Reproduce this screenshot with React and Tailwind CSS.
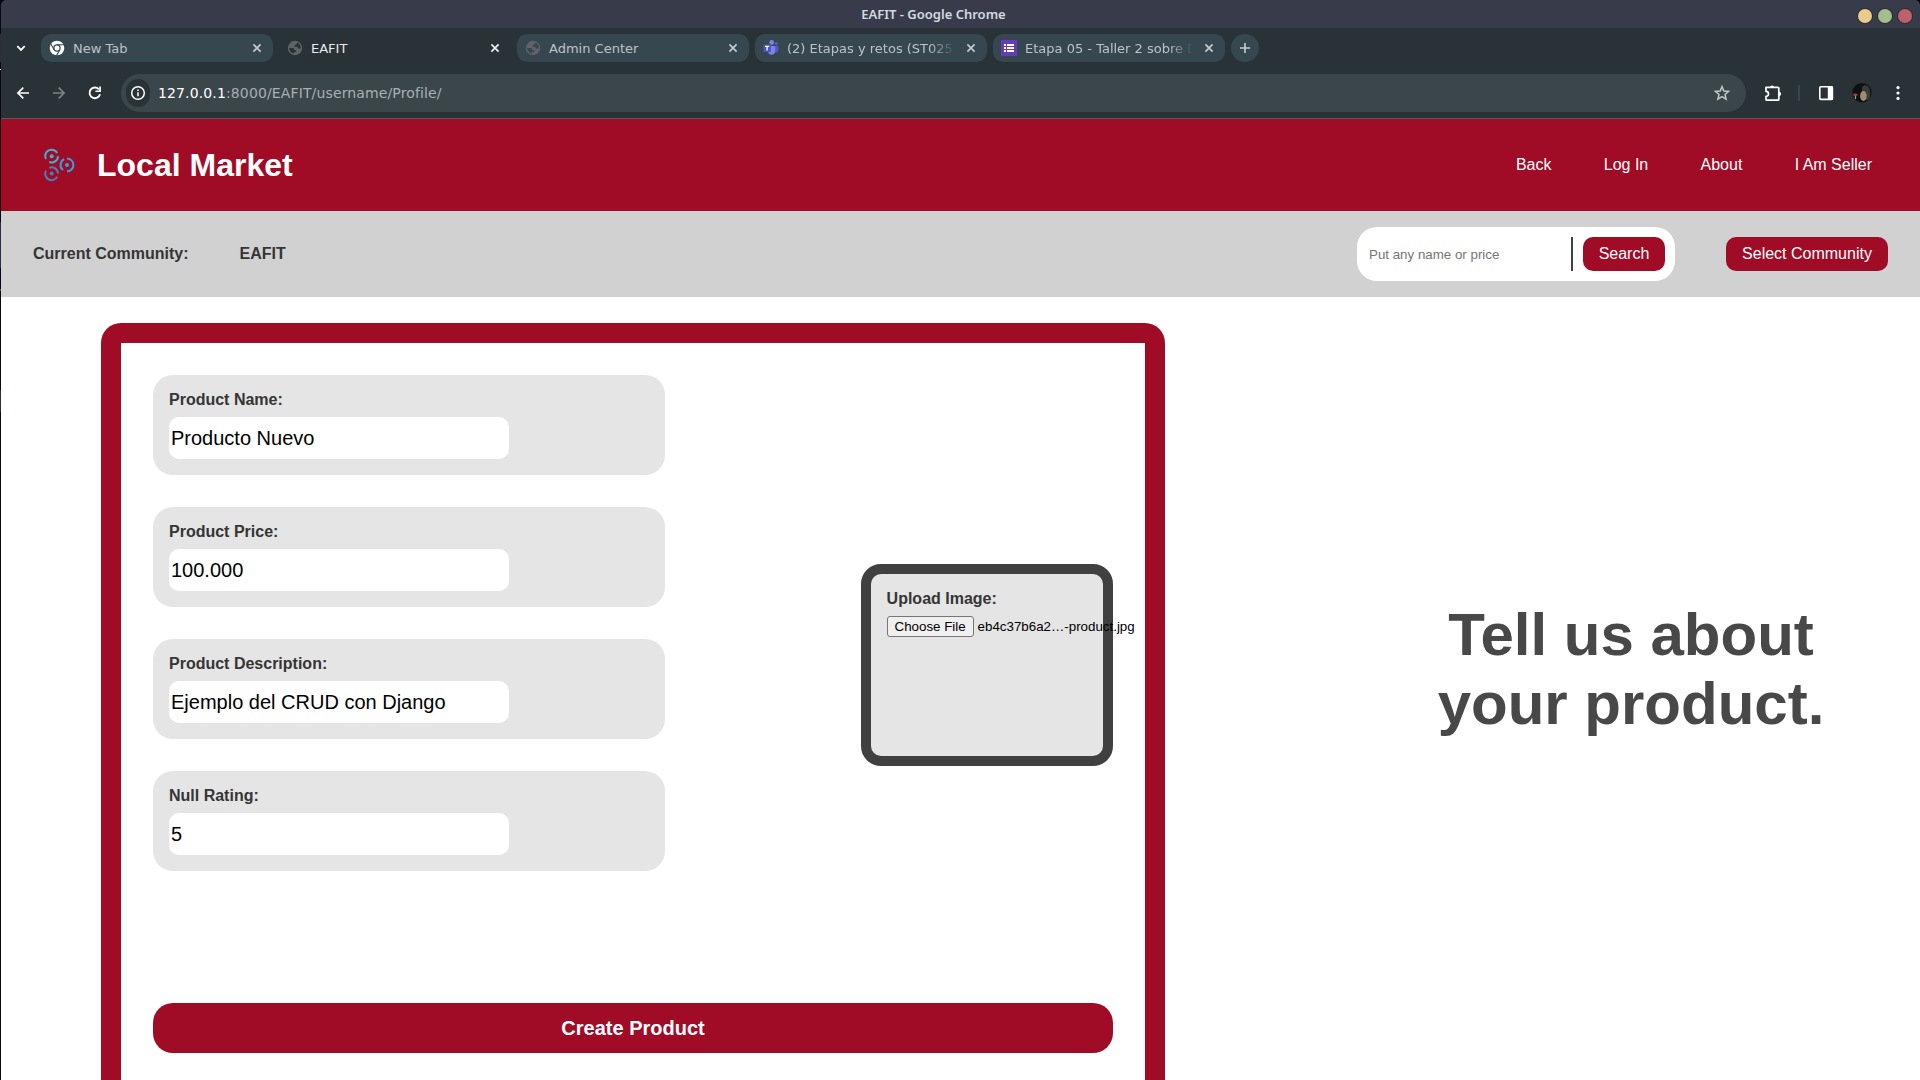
import React from "react";

const fade = "[mask-image:linear-gradient(to_right,black_85%,transparent)]";

function Close({ color }) {
  return (
    <svg width="16" height="16" viewBox="0 0 16 16" className="shrink-0">
      <path d="M4.4 4.4 L11.6 11.6 M11.6 4.4 L4.4 11.6" stroke={color} strokeWidth="1.7" fill="none" />
    </svg>
  );
}

function ChromeIcon() {
  return (
    <svg width="16" height="16" viewBox="0 0 16 16" className="shrink-0">
      <circle cx="8" cy="8" r="7.3" fill="#fff" />
      <circle cx="8" cy="8" r="3.7" fill="#37474f" />
      <circle cx="8" cy="8" r="2.5" fill="#fff" />
      <path d="M8 4.7 H15 M5.1 9.7 L1.7 3.7 M10.9 9.7 L7.6 15.4" stroke="#37474f" strokeWidth="1.1" fill="none" />
    </svg>
  );
}

function GlobeIcon({ land }) {
  return (
    <svg width="16" height="16" viewBox="0 0 16 16" className="shrink-0">
      <circle cx="8" cy="8" r="7.2" fill="#5f6368" />
      <path d="M2.2 8 H5 C6.6 8 7.4 8.6 7.4 10.2 H9.2 V12 H7.2 V13.6 C4.2 13.2 2.2 10.8 2.2 8 Z" fill={land} />
      <path d="M9.8 2.5 C10.2 4.4 9.2 4.8 7.6 4.9 V6.8 H9.6 C10.6 6.8 10.8 7.6 10.8 8.6 H13.7 C14 5.6 12.4 3.2 9.8 2.5 Z" fill={land} />
    </svg>
  );
}

function TeamsIcon() {
  return (
    <svg width="16" height="16" viewBox="0 0 16 16" className="shrink-0">
      <circle cx="13.2" cy="3.7" r="1.6" fill="#5059c9" />
      <circle cx="8.7" cy="2.5" r="2.4" fill="#7b83eb" />
      <path d="M11.5 6 H15.5 V10 A2.6 2.6 0 0 1 11.5 12 Z" fill="#5059c9" />
      <path d="M5 6 H12.2 V11.8 A3.7 3.7 0 0 1 5 11.8 Z" fill="#7b83eb" />
      <rect x="0.4" y="4.6" width="7.4" height="7.4" rx="0.6" fill="#4b53bc" />
      <path d="M2 6.4 H6.2 M4.1 6.4 V10.6" stroke="#fff" strokeWidth="1.3" fill="none" />
    </svg>
  );
}

function FormsIcon() {
  return (
    <svg width="16" height="16" viewBox="0 0 16 16" className="shrink-0">
      <rect width="16" height="16" fill="#673ab7" />
      <path d="M3 4h2v2H3z M6 4h7v2H6z M3 7h2v2H3z M6 7h7v2H6z M3 10h2v2H3z M6 10h7v2H6z" fill="#fff" />
    </svg>
  );
}

function Tab({ icon, title, active, long }) {
  return (
    <div className={"flex h-7 w-[232px] items-center rounded-[10px] pl-2 " + (active ? "" : "bg-[#37474f]")}>
      {icon}
      <div
        className={
          "ml-2 w-[168px] overflow-hidden whitespace-nowrap pt-0.5 text-[13px] leading-7 " +
          (active ? "text-[#e8eaeb] " : "text-[#bcc3c6] ") +
          (long ? fade : "")
        }
      >
        {title}
      </div>
      <div className="ml-2"><Close color={active ? "#eef0f1" : "#c3c9cc"} /></div>
    </div>
  );
}

function TitleBar() {
  return (
    <div className="relative flex h-7 items-center justify-center rounded-t-[5px] bg-[#383c4a] pt-0.5 pr-[54px] font-['Noto_Sans',sans-serif] text-[13px] font-semibold text-[#d3dae3]">
      <span>EAFIT - Google Chrome</span>
      <div className="absolute top-[9px] right-2 flex gap-[6px]">
        <div className="h-[14px] w-[14px] rounded-full bg-[#ebcb8b] ring-1 ring-[#2b2f3a]" />
        <div className="h-[14px] w-[14px] rounded-full bg-[#a3be8c] ring-1 ring-[#2b2f3a]" />
        <div className="h-[14px] w-[14px] rounded-full bg-[#bf616a] ring-1 ring-[#2b2f3a]" />
      </div>
    </div>
  );
}

function TabStrip() {
  return (
    <div className="flex h-[46px] items-start gap-1.5 bg-[#283237] pt-1.5 pl-3">
      <div className="flex h-7 w-[22px] items-center">
        <svg width="16" height="16" viewBox="0 0 16 16">
          <path d="M4.3 6.2 L8 9.9 L11.7 6.2" stroke="#fff" strokeWidth="1.8" fill="none" />
        </svg>
      </div>
      <Tab icon={<ChromeIcon />} title="New Tab" />
      <Tab icon={<GlobeIcon land="#283237" />} title="EAFIT" active />
      <Tab icon={<GlobeIcon land="#37474f" />} title="Admin Center" />
      <Tab icon={<TeamsIcon />} title="(2) Etapas y retos (ST0251" long />
      <Tab icon={<FormsIcon />} title="Etapa 05 - Taller 2 sobre D" long />
      <div className="flex h-7 w-7 items-center justify-center rounded-full bg-[#37474f]">
        <svg width="12" height="12" viewBox="0 0 12 12">
          <path d="M6 1 V11 M1 6 H11" stroke="#c8cdd0" strokeWidth="1.6" />
        </svg>
      </div>
    </div>
  );
}

function Toolbar() {
  return (
    <div className="flex h-[45px] items-start border-b border-[#525b5f] bg-[#283237]">
      <div className="flex h-[38px] w-[120px] items-center gap-5 pl-[14px]">
        <svg width="16" height="16" viewBox="0 0 16 16">
          <path d="M14 8 H3 M8.3 2.6 L2.9 8 L8.3 13.4" stroke="#fff" strokeWidth="1.7" fill="none" />
        </svg>
        <svg width="16" height="16" viewBox="0 0 16 16">
          <path d="M2 8 H13 M7.7 2.6 L13.1 8 L7.7 13.4" stroke="#7b8286" strokeWidth="1.7" fill="none" />
        </svg>
        <svg width="16" height="16" viewBox="0 0 16 16">
          <path d="M13 9.2 A5.3 5.3 0 1 1 11.8 4.3" stroke="#fff" strokeWidth="1.9" fill="none" />
          <path d="M13.9 1.6 V7 H8.4 V5.4 H12.2 V1.6 Z" fill="#fff" />
        </svg>
      </div>
      <div className="flex h-[38px] w-[1625px] items-center rounded-full bg-[#3b464b] pl-[5px]">
        <div className="flex h-7 w-6 items-center justify-center rounded-full bg-[#283237]">
          <svg width="16" height="16" viewBox="0 0 16 16">
            <circle cx="8" cy="8" r="6.3" stroke="#fff" strokeWidth="1.5" fill="none" />
            <path d="M8 7.2 V11.3 M8 4.6 V6.1" stroke="#fff" strokeWidth="1.5" />
          </svg>
        </div>
        <div className="ml-2 flex-1 text-[14px] tracking-[0.13px] text-[#a9afb2]">
          <span className="text-white">127.0.0.1</span>:8000/EAFIT/username/Profile/
        </div>
        <svg width="18" height="18" viewBox="0 0 18 18" className="mr-[15px]">
          <path d="M9 2.6 L10.8 7 L15.6 7.4 L12 10.5 L13.1 15.2 L9 12.7 L4.9 15.2 L6 10.5 L2.4 7.4 L7.2 7 Z" stroke="#c3c7c9" strokeWidth="1.5" fill="none" />
        </svg>
      </div>
      <div className="flex h-[38px] flex-1 items-center pl-[18px]">
        <svg width="18" height="18" viewBox="0 0 18 18">
          <path d="M2 3.4 H14 Q14.8 3.4 14.8 4.2 V15.4 Q14.8 16.2 14 16.2 H2.8 Q2 16.2 2 15.4 V12.4 A2.3 2.3 0 0 0 2 7.4 Z" stroke="#fff" strokeWidth="1.7" fill="none" strokeLinejoin="round" />
          <path d="M6 3 A2.2 2.2 0 0 1 10.2 3 Z M15 7.8 A2.1 2.1 0 0 1 15 12 Z" fill="#fff" />
        </svg>
        <div className="ml-4 h-4 w-0.5 rounded bg-[#37474f]" />
        <svg width="16" height="16" viewBox="0 0 16 16" className="ml-[18px]">
          <rect x="1.8" y="1.8" width="12.6" height="12.6" rx="1" stroke="#fff" strokeWidth="1.6" fill="none" />
          <rect x="9.8" y="1.4" width="5.2" height="13.4" fill="#fff" />
        </svg>
        <svg width="20" height="20" viewBox="0 0 20 20" className="ml-[18px]">
          <circle cx="10" cy="9.6" r="9.6" fill="#0e1113" />
          <path d="M10 5 C11 1 16 2 17 5 C19 9 19 14 16 17 L10 17 Z" fill="#3a3b3a" />
          <ellipse cx="11.4" cy="13" rx="3.3" ry="5" fill="#9b8e70" />
          <path d="M0.8 11.8 Q3.5 8.8 6.2 12 L4.6 13 H2 Z" fill="#8d3b3d" />
          <path d="M3.5 12.5 V16" stroke="#b29a72" strokeWidth="1.2" />
        </svg>
        <svg width="4" height="16" viewBox="0 0 4 16" className="ml-6">
          <circle cx="2" cy="2.6" r="1.6" fill="#fff" />
          <circle cx="2" cy="8" r="1.6" fill="#fff" />
          <circle cx="2" cy="13.4" r="1.6" fill="#fff" />
        </svg>
      </div>
    </div>
  );
}

function Logo() {
  return (
    <svg width="32" height="34" viewBox="0 0 32 34" fill="none" strokeWidth="2">
      <g stroke="#3cb4cf">
        <circle cx="7.7" cy="8.2" r="2" fill="#3cb4cf" stroke="none" />
        <path d="M2 11 A6.3 6.3 0 0 1 13.2 5" />
        <path d="M14 8.2 A6.3 6.3 0 0 1 5.3 14" />
      </g>
      <g stroke="#4a7ebd">
        <circle cx="7.7" cy="25.6" r="2" fill="#4a7ebd" stroke="none" />
        <path d="M2 22.8 A6.3 6.3 0 0 0 13.2 28.8" />
        <path d="M14 25.6 A6.3 6.3 0 0 0 5.3 19.8" />
      </g>
      <g stroke="#389fdc">
        <circle cx="23" cy="16.9" r="2" fill="#389fdc" stroke="none" />
        <path d="M23 10.5 A6.4 6.4 0 0 1 23 23.3" />
        <path d="M20.2 11.2 A6.4 6.4 0 0 0 19 22" />
      </g>
    </svg>
  );
}

function Header() {
  const links = ["Back", "Log In", "About", "I Am Seller"];
  return (
    <header className="flex h-[92px] items-center justify-between bg-[#a00b26] pr-12 pl-[43px] text-white">
      <div className="flex items-center">
        <Logo />
        <h1 className="ml-[21px] text-[32px] leading-9 font-bold">Local Market</h1>
      </div>
      <nav className="flex gap-[52.3px] text-base leading-[18px]">
        {links.map((l) => (
          <a key={l}>{l}</a>
        ))}
      </nav>
    </header>
  );
}

function CommunityBar() {
  return (
    <section className="flex h-[86px] items-center bg-[#d1d1d1] pr-8 pl-8 text-base">
      <div className="flex flex-1 gap-[51px] leading-[18px] font-bold text-[#353535]">
        <span>Current Community:</span>
        <span>EAFIT</span>
      </div>
      <div className="flex h-[54px] w-[318px] items-center rounded-[20px] bg-white pr-[10px] pl-3">
        <span className="flex-1 pt-0.5 text-[13.333px] text-[#757575]">Put any name or price</span>
        <div className="h-[34px] w-0.5 bg-[#404040]" />
        <button className="ml-[10px] h-[34px] w-[82px] rounded-[10px] bg-[#a00b26] text-white">Search</button>
      </div>
      <button className="ml-[51px] h-[34px] w-[162px] rounded-[10px] bg-[#a00b26] text-white">Select Community</button>
    </section>
  );
}

function Field({ label, value }) {
  return (
    <div className="h-[100px] w-[512px] rounded-[20px] bg-[#e5e5e5] p-4">
      <div className="text-base leading-[18px] font-bold text-[#353535]">{label}</div>
      <div className="mt-2 h-[42px] w-[340px] rounded-[10px] bg-white pl-0.5 text-[20px] leading-[42px] text-black">{value}</div>
    </div>
  );
}

function ProductForm() {
  return (
    <form className="h-[780px] w-[1064px] rounded-[20px] bg-[#a00b26] p-5">
      <div className="h-[760px] bg-white p-8">
        <div className="flex h-[628px] justify-between">
          <div className="flex flex-col gap-8">
            <Field label="Product Name:" value="Producto Nuevo" />
            <Field label="Product Price:" value="100.000" />
            <Field label="Product Description:" value="Ejemplo del CRUD con Django" />
            <Field label="Null Rating:" value="5" />
          </div>
          <div className="mt-[189px] h-[202px] w-[252px] rounded-[20px] border-10 border-[#404040] bg-[#e5e5e5] py-4 pr-4 pl-[15.6px]">
            <div className="text-base leading-[18px] font-bold text-[#353535]">Upload Image:</div>
            <div className="mt-2 flex h-[21px] items-center gap-1 text-[13.333px] whitespace-nowrap text-black">
              <button type="button" className="h-[21px] w-[87px] shrink-0 rounded-[3px] border border-[#767676] bg-[#efefef] leading-[19px]">Choose File</button>
              <span>eb4c37b6a2…-product.jpg</span>
            </div>
          </div>
        </div>
        <button type="button" className="h-[50px] w-full rounded-[20px] bg-[#a00b26] text-[20px] font-bold text-white">Create Product</button>
      </div>
    </form>
  );
}

export default function App() {
  return (
    <div className="flex h-[1080px] w-[1920px] overflow-hidden bg-black">
      <div className="flex w-px shrink-0 flex-col bg-[#0b0614]">
        <div className="mt-[34px] h-7 bg-[#2b2f3d]" />
        <div className="mt-[7px] h-px bg-white" />
        <div className="mt-[152px] h-[46px] bg-[#2b2f3d]" />
        <div className="mt-[21px] h-[2px] bg-[#4a5060]" />
        <div className="mt-[99px] h-[22px] bg-[#2b2f3d]" />
      </div>
      <div className="w-[1919px] overflow-hidden">
        <div className="font-['DejaVu_Sans',sans-serif]">
          <TitleBar />
          <TabStrip />
          <Toolbar />
        </div>
        <div className="bg-white font-['Liberation_Sans',sans-serif]">
          <Header />
          <CommunityBar />
          <main className="flex h-[783px] overflow-hidden pt-[26px] pl-[100px]">
            <ProductForm />
            <h2 className="mt-[277px] ml-[216px] w-[500px] text-center text-[60px] leading-[69px] font-bold text-[#484848]">
              Tell us about<br />your product.
            </h2>
          </main>
        </div>
      </div>
    </div>
  );
}
